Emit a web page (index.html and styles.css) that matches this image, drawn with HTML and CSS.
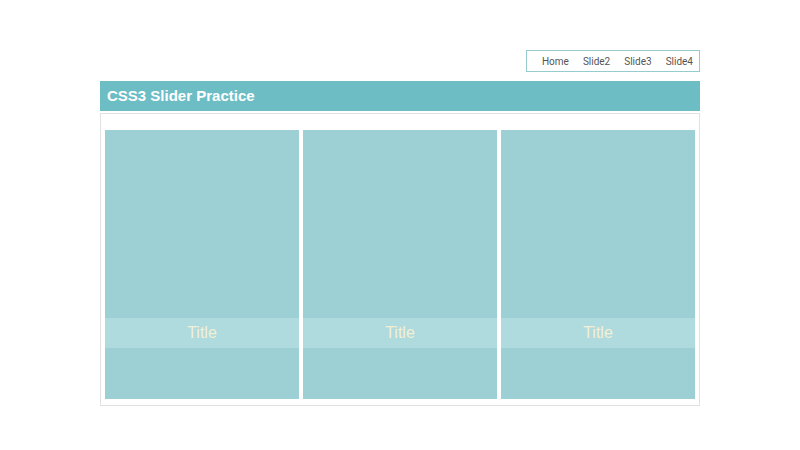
FILE: index.html
```html
<!DOCTYPE html>
<html>
<head>
<meta charset="utf-8">
<link rel="stylesheet" href="styles.css">
</head>
<body>
<div class="page">
  <div class="nav-row">
    <ul class="nav">
      <li>Home</li>
      <li>Slide2</li>
      <li>Slide3</li>
      <li>Slide4</li>
    </ul>
  </div>
  <h1 class="header">CSS3 Slider Practice</h1>
  <div class="slider">
    <div class="card"><div class="card-title">Title</div></div>
    <div class="card"><div class="card-title">Title</div></div>
    <div class="card"><div class="card-title">Title</div></div>
  </div>
</div>
</body>
</html>
```
FILE: styles.css
```css
html, body {
  margin: 0;
  padding: 0;
  background: #ffffff;
  font-family: "Liberation Sans", Arial, sans-serif;
}
.page {
  width: 600px;
  margin: 0 auto;
  padding-top: 50px;
}
.nav-row {
  display: flex;
  justify-content: flex-end;
}
.nav {
  list-style: none;
  margin: 0;
  padding: 0 6px 0 15px;
  height: 20px;
  border: 1px solid #96ccd0;
  display: flex;
  align-items: center;
  gap: 14px;
  font-family: Roboto, "Liberation Sans", sans-serif;
  font-size: 10px;
  color: #555555;
}
.header {
  margin: 9px 0 0 0;
  height: 30px;
  line-height: 30px;
  background: #6dbdc4;
  color: #ffffff;
  font-size: 15px;
  font-weight: bold;
  padding: 0 0 0 7px;
}
.slider {
  margin-top: 2px;
  border: 1px solid #e2e2e2;
  padding: 16px 4px 6px 4px;
  display: flex;
  gap: 4px;
}
.card {
  flex: 1;
  height: 269px;
  background: #9dd0d4;
  padding-top: 188px;
  box-sizing: border-box;
}
.card-title {
  height: 30px;
  line-height: 30px;
  background: #b0dbde;
  text-align: center;
  color: #f2f0d2;
  font-size: 16px;
}
```
